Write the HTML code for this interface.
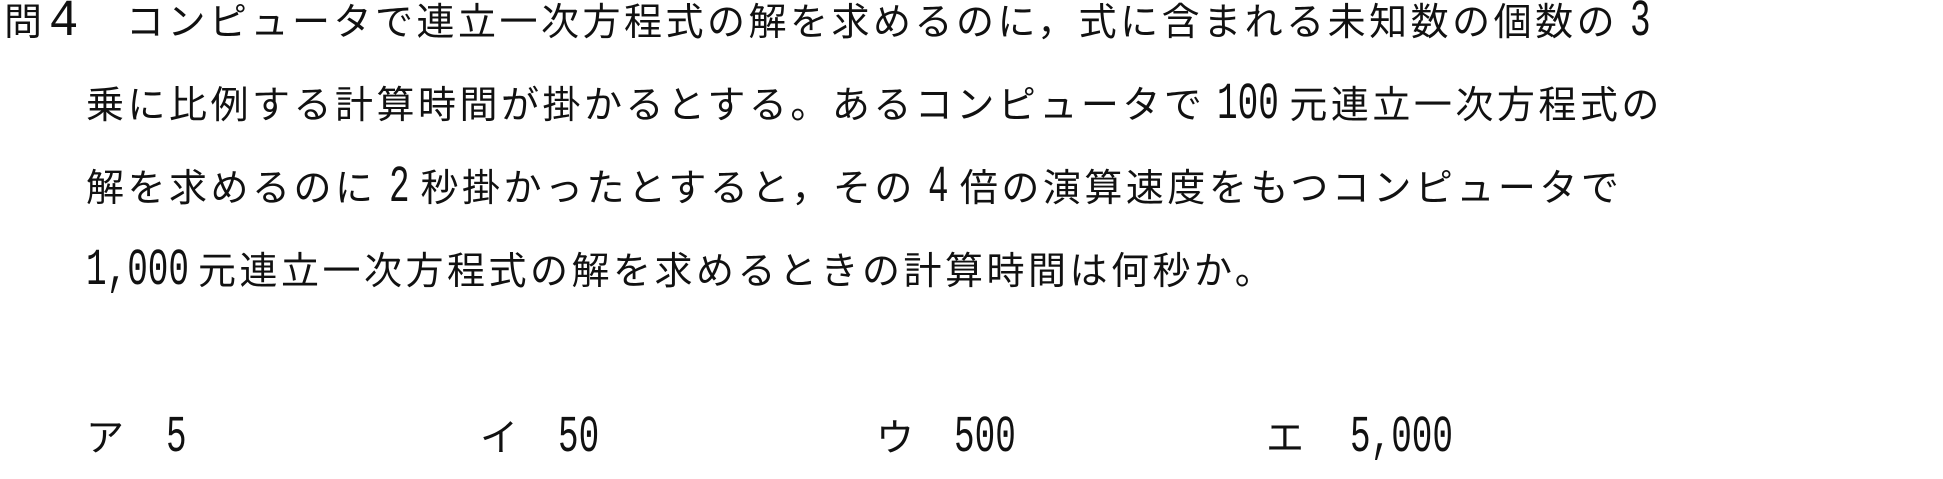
<!DOCTYPE html>
<html><head><meta charset="utf-8"><style>
html,body{margin:0;padding:0;background:#fff;}
body{width:1943px;height:479px;position:relative;overflow:hidden;color:#111;font-family:"Liberation Sans","Noto Sans CJK JP",sans-serif;}
.l{position:absolute;white-space:nowrap;font-family:"Noto Sans CJK JP",sans-serif;font-size:38px;line-height:40px;letter-spacing:3.5px;}
.n{display:inline-block;letter-spacing:0;vertical-align:baseline;}
.n i{display:inline-block;font-style:normal;font-family:"Liberation Mono",monospace;font-size:52px;line-height:40px;transform:scaleX(0.66);transform-origin:0 50%;}
</style></head><body>
<div class="l" style="left:4px;top:-1px;">問<span class="n" style="width:39px"><i style="transform:scaleX(0.95) translateX(3px)">4</i></span>　コンピュータで連立一次方程式の解を求めるのに，式に含まれる未知数の個数の <span class="n" style="width:20px"><i>3</i></span></div>
<div class="l" style="left:86px;top:82px;">乗に比例する計算時間が掛かるとする。あるコンピュータで <span class="n" style="width:60px"><i>100</i></span> 元連立一次方程式の</div>
<div class="l" style="left:86px;top:165px;">解を求めるのに <span class="n" style="width:20px"><i>2</i></span> 秒掛かったとすると，その <span class="n" style="width:20px"><i>4</i></span> 倍の演算速度をもつコンピュータで</div>
<div class="l" style="left:86px;top:248px;"><span class="n" style="width:100px"><i>1,000</i></span> 元連立一次方程式の解を求めるときの計算時間は何秒か。</div>
<div class="l" style="left:86px;top:415px;">ア</div><div class="l" style="left:166px;top:415px;"><span class="n" style="width:20px"><i>5</i></span></div>
<div class="l" style="left:480px;top:415px;">イ</div><div class="l" style="left:558px;top:415px;"><span class="n" style="width:40px"><i>50</i></span></div>
<div class="l" style="left:876px;top:415px;">ウ</div><div class="l" style="left:954px;top:415px;"><span class="n" style="width:60px"><i>500</i></span></div>
<div class="l" style="left:1266px;top:415px;">エ</div><div class="l" style="left:1350px;top:415px;"><span class="n" style="width:100px"><i>5,000</i></span></div>
</body></html>
